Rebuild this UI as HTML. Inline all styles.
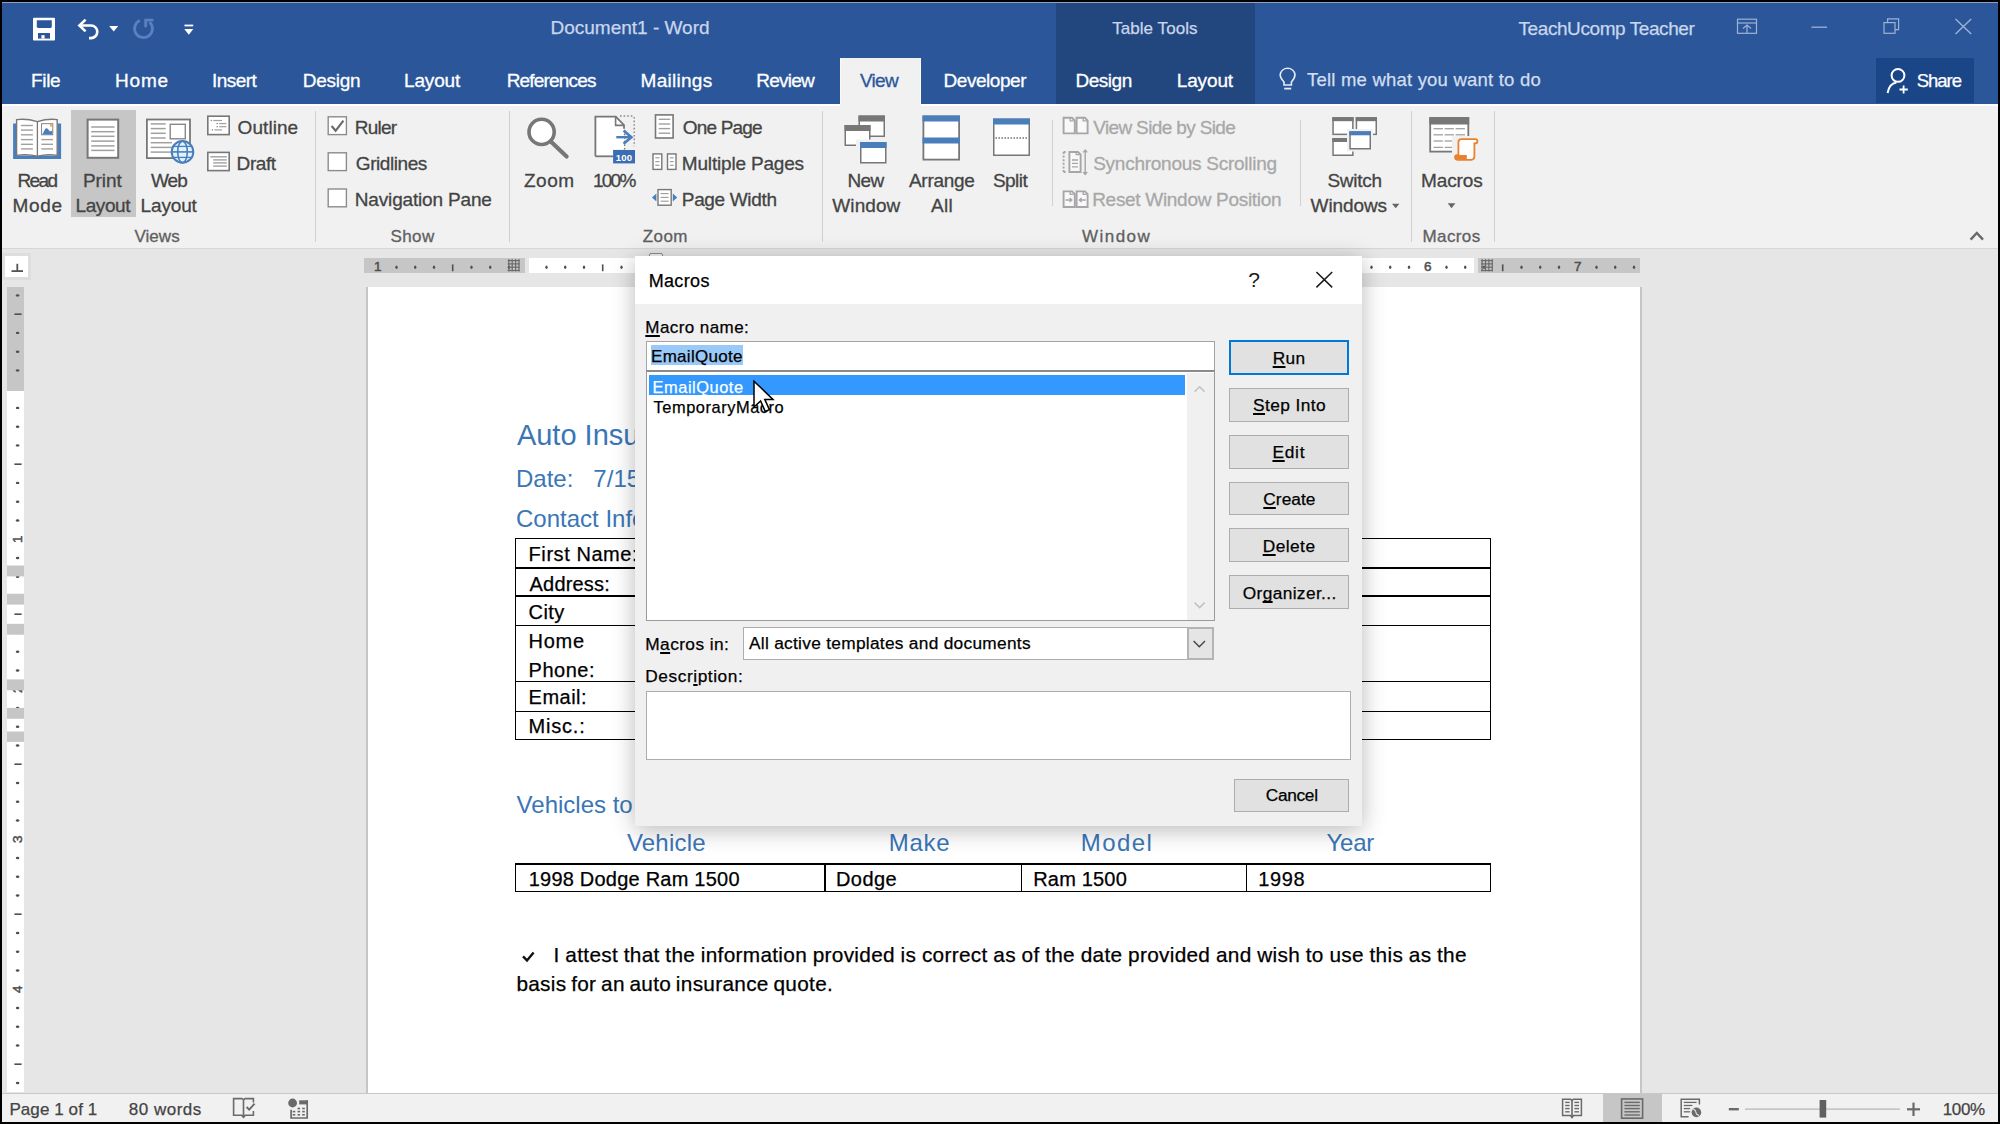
<!DOCTYPE html>
<html><head><meta charset="utf-8"><title>Document1 - Word</title>
<style>
html,body{margin:0;padding:0;}
body{width:2000px;height:1124px;overflow:hidden;position:relative;background:#000;font-family:"Liberation Sans",sans-serif;}
body>div,body>span,body>svg{position:absolute;display:block;}
body>span{white-space:pre;}
u{text-decoration:underline;text-underline-offset:1.6px;text-decoration-thickness:1.6px;text-decoration-skip-ink:none;}
</style></head><body>
<div style="left:2px;top:2px;width:1996px;height:102px;background:#2b579a;"></div>
<div style="left:2px;top:2px;width:1996px;height:1px;background:#8da3c6;"></div>
<div style="left:1055.6px;top:3px;width:199.0px;height:101px;background:#22477f;"></div>
<div style="left:840px;top:58px;width:81px;height:46px;background:#f1f1f1;box-shadow:inset 1px 0 0 #fbfbfb, inset -1px 0 0 #fbfbfb;"></div>
<div style="left:1876px;top:57.7px;width:98px;height:44.89999999999999px;background:#1a4688;"></div>
<div style="left:2px;top:104px;width:1996px;height:144px;background:#f1f1f1;"></div>
<div style="left:2px;top:104px;width:838px;height:1.5999999999999943px;background:#ffffff;"></div>
<div style="left:921px;top:104px;width:1077px;height:1.5999999999999943px;background:#ffffff;"></div>
<div style="left:2px;top:105.6px;width:838px;height:2.8000000000000114px;background:linear-gradient(#f0f2f5,#f1f1f1);"></div>
<div style="left:921px;top:105.6px;width:1077px;height:2.8000000000000114px;background:linear-gradient(#f0f2f5,#f1f1f1);"></div>
<div style="left:2px;top:247.6px;width:1996px;height:1.8000000000000114px;background:#d6d6d6;"></div>
<div style="left:2px;top:249px;width:1996px;height:844px;background:#e6e6e6;"></div>
<div style="left:2px;top:1092.5px;width:1996px;height:1.5px;background:#c8c8c8;"></div>
<div style="left:2px;top:1094px;width:1996px;height:28px;background:#f1f1f1;"></div>
<span style="left:550.50px;top:18.42px;font:400 19px/19px 'Liberation Sans';color:#c9d6ec;letter-spacing:-0.002px;word-spacing:0.000px;-webkit-text-stroke:0.25px currentColor;">Document1 - Word</span>
<span style="left:1112.20px;top:20.21px;font:400 17px/17px 'Liberation Sans';color:#c9d6ec;letter-spacing:0.055px;word-spacing:0.000px;-webkit-text-stroke:0.25px currentColor;">Table Tools</span>
<span style="left:1518.50px;top:18.72px;font:400 19px/19px 'Liberation Sans';color:#c9d6ec;letter-spacing:-0.419px;word-spacing:0.000px;-webkit-text-stroke:0.25px currentColor;">TeachUcomp Teacher</span>
<span style="left:31.00px;top:71.32px;font:400 19px/19px 'Liberation Sans';color:#ffffff;letter-spacing:-0.349px;word-spacing:0.000px;-webkit-text-stroke:0.3px currentColor;">File</span>
<span style="left:115.00px;top:71.32px;font:400 19px/19px 'Liberation Sans';color:#ffffff;letter-spacing:0.795px;word-spacing:0.000px;-webkit-text-stroke:0.3px currentColor;">Home</span>
<span style="left:212.00px;top:71.32px;font:400 19px/19px 'Liberation Sans';color:#ffffff;letter-spacing:-0.548px;word-spacing:0.000px;-webkit-text-stroke:0.3px currentColor;">Insert</span>
<span style="left:302.75px;top:71.32px;font:400 19px/19px 'Liberation Sans';color:#ffffff;letter-spacing:-0.265px;word-spacing:0.000px;-webkit-text-stroke:0.3px currentColor;">Design</span>
<span style="left:404.00px;top:71.32px;font:400 19px/19px 'Liberation Sans';color:#ffffff;letter-spacing:-0.154px;word-spacing:0.000px;-webkit-text-stroke:0.3px currentColor;">Layout</span>
<span style="left:506.70px;top:71.32px;font:400 19px/19px 'Liberation Sans';color:#ffffff;letter-spacing:-0.818px;word-spacing:0.000px;-webkit-text-stroke:0.3px currentColor;">References</span>
<span style="left:640.60px;top:71.32px;font:400 19px/19px 'Liberation Sans';color:#ffffff;letter-spacing:0.273px;word-spacing:0.000px;-webkit-text-stroke:0.3px currentColor;">Mailings</span>
<span style="left:756.30px;top:71.32px;font:400 19px/19px 'Liberation Sans';color:#ffffff;letter-spacing:-0.795px;word-spacing:0.000px;-webkit-text-stroke:0.3px currentColor;">Review</span>
<span style="left:943.50px;top:71.32px;font:400 19px/19px 'Liberation Sans';color:#ffffff;letter-spacing:-0.447px;word-spacing:0.000px;-webkit-text-stroke:0.3px currentColor;">Developer</span>
<span style="left:1075.40px;top:71.32px;font:400 19px/19px 'Liberation Sans';color:#ffffff;letter-spacing:-0.455px;word-spacing:0.000px;-webkit-text-stroke:0.3px currentColor;">Design</span>
<span style="left:1176.80px;top:71.32px;font:400 19px/19px 'Liberation Sans';color:#ffffff;letter-spacing:-0.154px;word-spacing:0.000px;-webkit-text-stroke:0.3px currentColor;">Layout</span>
<span style="left:859.90px;top:71.32px;font:400 19px/19px 'Liberation Sans';color:#2b579a;letter-spacing:-0.673px;word-spacing:0.000px;-webkit-text-stroke:0.3px currentColor;">View</span>
<span style="left:1307.00px;top:71.14px;font:400 18.5px/18.5px 'Liberation Sans';color:#d3def0;letter-spacing:0.208px;word-spacing:0.000px;-webkit-text-stroke:0.25px currentColor;">Tell me what you want to do</span>
<span style="left:1916.70px;top:71.74px;font:400 18.5px/18.5px 'Liberation Sans';color:#ffffff;letter-spacing:-0.994px;word-spacing:0.000px;-webkit-text-stroke:0.25px currentColor;">Share</span>
<div style="left:71px;top:109.5px;width:65px;height:107.5px;background:#c6c6c6;"></div>
<span style="left:17.40px;top:171.42px;font:400 19px/19px 'Liberation Sans';color:#444444;letter-spacing:-1.552px;word-spacing:0.000px;-webkit-text-stroke:0.3px currentColor;">Read</span>
<span style="left:12.60px;top:196.32px;font:400 19px/19px 'Liberation Sans';color:#444444;letter-spacing:0.680px;word-spacing:0.000px;-webkit-text-stroke:0.3px currentColor;">Mode</span>
<span style="left:83.00px;top:171.42px;font:400 19px/19px 'Liberation Sans';color:#444444;letter-spacing:-0.097px;word-spacing:0.000px;-webkit-text-stroke:0.3px currentColor;">Print</span>
<span style="left:75.50px;top:196.32px;font:400 19px/19px 'Liberation Sans';color:#444444;letter-spacing:-0.414px;word-spacing:0.000px;-webkit-text-stroke:0.3px currentColor;">Layout</span>
<span style="left:151.00px;top:171.42px;font:400 19px/19px 'Liberation Sans';color:#444444;letter-spacing:-0.978px;word-spacing:0.000px;-webkit-text-stroke:0.3px currentColor;">Web</span>
<span style="left:140.60px;top:196.32px;font:400 19px/19px 'Liberation Sans';color:#444444;letter-spacing:-0.154px;word-spacing:0.000px;-webkit-text-stroke:0.3px currentColor;">Layout</span>
<span style="left:237.60px;top:118.22px;font:400 19px/19px 'Liberation Sans';color:#444444;letter-spacing:0.061px;word-spacing:0.000px;-webkit-text-stroke:0.3px currentColor;">Outline</span>
<span style="left:236.60px;top:154.12px;font:400 19px/19px 'Liberation Sans';color:#444444;letter-spacing:-0.424px;word-spacing:0.000px;-webkit-text-stroke:0.3px currentColor;">Draft</span>
<span style="left:134.40px;top:227.71px;font:400 17px/17px 'Liberation Sans';color:#606060;letter-spacing:0.065px;word-spacing:0.000px;-webkit-text-stroke:0.3px currentColor;">Views</span>
<span style="left:354.80px;top:118.22px;font:400 19px/19px 'Liberation Sans';color:#444444;letter-spacing:-0.794px;word-spacing:0.000px;-webkit-text-stroke:0.3px currentColor;">Ruler</span>
<span style="left:355.80px;top:154.12px;font:400 19px/19px 'Liberation Sans';color:#444444;letter-spacing:-0.434px;word-spacing:0.000px;-webkit-text-stroke:0.3px currentColor;">Gridlines</span>
<span style="left:354.80px;top:189.92px;font:400 19px/19px 'Liberation Sans';color:#444444;letter-spacing:-0.169px;word-spacing:0.000px;-webkit-text-stroke:0.3px currentColor;">Navigation Pane</span>
<span style="left:390.60px;top:227.71px;font:400 17px/17px 'Liberation Sans';color:#606060;letter-spacing:0.351px;word-spacing:0.000px;-webkit-text-stroke:0.3px currentColor;">Show</span>
<span style="left:524.00px;top:171.42px;font:400 19px/19px 'Liberation Sans';color:#444444;letter-spacing:0.487px;word-spacing:0.000px;-webkit-text-stroke:0.3px currentColor;">Zoom</span>
<span style="left:593.00px;top:171.42px;font:400 19px/19px 'Liberation Sans';color:#444444;letter-spacing:-1.767px;word-spacing:0.000px;-webkit-text-stroke:0.3px currentColor;">100%</span>
<span style="left:682.80px;top:118.22px;font:400 19px/19px 'Liberation Sans';color:#444444;letter-spacing:-0.828px;word-spacing:0.000px;-webkit-text-stroke:0.3px currentColor;">One Page</span>
<span style="left:681.80px;top:154.12px;font:400 19px/19px 'Liberation Sans';color:#444444;letter-spacing:-0.179px;word-spacing:0.000px;-webkit-text-stroke:0.3px currentColor;">Multiple Pages</span>
<span style="left:681.80px;top:189.92px;font:400 19px/19px 'Liberation Sans';color:#444444;letter-spacing:-0.339px;word-spacing:0.000px;-webkit-text-stroke:0.3px currentColor;">Page Width</span>
<span style="left:642.80px;top:227.71px;font:400 17px/17px 'Liberation Sans';color:#606060;letter-spacing:0.402px;word-spacing:0.000px;-webkit-text-stroke:0.3px currentColor;">Zoom</span>
<span style="left:847.40px;top:171.42px;font:400 19px/19px 'Liberation Sans';color:#444444;letter-spacing:-0.594px;word-spacing:0.000px;-webkit-text-stroke:0.3px currentColor;">New</span>
<span style="left:832.30px;top:196.32px;font:400 19px/19px 'Liberation Sans';color:#444444;letter-spacing:0.089px;word-spacing:0.000px;-webkit-text-stroke:0.3px currentColor;">Window</span>
<span style="left:909.00px;top:171.42px;font:400 19px/19px 'Liberation Sans';color:#444444;letter-spacing:-0.305px;word-spacing:0.000px;-webkit-text-stroke:0.3px currentColor;">Arrange</span>
<span style="left:931.00px;top:196.32px;font:400 19px/19px 'Liberation Sans';color:#444444;letter-spacing:0.353px;word-spacing:0.000px;-webkit-text-stroke:0.3px currentColor;">All</span>
<span style="left:992.90px;top:171.42px;font:400 19px/19px 'Liberation Sans';color:#444444;letter-spacing:-0.546px;word-spacing:0.000px;-webkit-text-stroke:0.3px currentColor;">Split</span>
<span style="left:1093.20px;top:118.22px;font:400 19px/19px 'Liberation Sans';color:#a8a8a8;letter-spacing:-0.639px;word-spacing:0.000px;-webkit-text-stroke:0.3px currentColor;">View Side by Side</span>
<span style="left:1093.20px;top:154.12px;font:400 19px/19px 'Liberation Sans';color:#a8a8a8;letter-spacing:-0.259px;word-spacing:0.000px;-webkit-text-stroke:0.3px currentColor;">Synchronous Scrolling</span>
<span style="left:1092.20px;top:189.92px;font:400 19px/19px 'Liberation Sans';color:#a8a8a8;letter-spacing:-0.300px;word-spacing:0.000px;-webkit-text-stroke:0.3px currentColor;">Reset Window Position</span>
<span style="left:1082.00px;top:227.71px;font:400 17px/17px 'Liberation Sans';color:#606060;letter-spacing:1.463px;word-spacing:0.000px;-webkit-text-stroke:0.3px currentColor;">Window</span>
<span style="left:1327.40px;top:171.42px;font:400 19px/19px 'Liberation Sans';color:#444444;letter-spacing:-0.239px;word-spacing:0.000px;-webkit-text-stroke:0.3px currentColor;">Switch</span>
<span style="left:1310.60px;top:196.32px;font:400 19px/19px 'Liberation Sans';color:#444444;letter-spacing:-0.113px;word-spacing:0.000px;-webkit-text-stroke:0.3px currentColor;">Windows</span>
<span style="left:1420.90px;top:171.42px;font:400 19px/19px 'Liberation Sans';color:#444444;letter-spacing:-0.078px;word-spacing:0.000px;-webkit-text-stroke:0.3px currentColor;">Macros</span>
<span style="left:1422.50px;top:227.71px;font:400 17px/17px 'Liberation Sans';color:#606060;letter-spacing:0.394px;word-spacing:0.000px;-webkit-text-stroke:0.3px currentColor;">Macros</span>
<div style="left:315px;top:111px;width:1px;height:131px;background:#d0d0d0;"></div>
<div style="left:509px;top:111px;width:1px;height:131px;background:#d0d0d0;"></div>
<div style="left:821.5px;top:111px;width:1.0px;height:131px;background:#d0d0d0;"></div>
<div style="left:1411px;top:111px;width:1px;height:131px;background:#d0d0d0;"></div>
<div style="left:1493.5px;top:111px;width:1.0px;height:131px;background:#d0d0d0;"></div>
<div style="left:1051.5px;top:120px;width:1.0px;height:86px;background:#d0d0d0;"></div>
<div style="left:1300px;top:120px;width:1px;height:86px;background:#d0d0d0;"></div>
<svg style="left:0;top:0" width="2000" height="260" viewBox="0 0 2000 260"><path d="M33 18.8 Q33 17.8 34 17.8 H54 Q55 17.8 55 18.8 V39.4 Q55 40.4 54 40.4 H34 Q33 40.4 33 39.4 Z" fill="#ffffff" /><path d="M36.8 20.2 H51.8 V27 L50.8 28 H37.8 L36.8 27 Z" fill="#2b579a" /><rect x="38" y="33" width="12" height="5.600000000000001" fill="#2b579a" /><rect x="41.4" y="35.2" width="3.200000000000003" height="3.3999999999999986" fill="#ffffff" /><path d="M80 25.5 H91 A6.3 6.3 0 0 1 91 38.1 H89" fill="none" stroke="#ffffff" stroke-width="2.6" /><path d="M85.6 19.6 L79.4 25.5 L85.6 31.4" fill="none" stroke="#ffffff" stroke-width="2.6" stroke-linejoin="miter"/><path d="M109.2 26 H118.2 L113.7 31.5 Z" fill="#ffffff" /><path d="M139.8 20.6 A8.9 8.9 0 1 0 149.6 22.2" fill="none" stroke="#5b80c0" stroke-width="2.8" /><path d="M153.4 20.1 H145.7 V27.2" fill="none" stroke="#5b80c0" stroke-width="2.8" /><rect x="184.5" y="24.6" width="8.699999999999989" height="1.7999999999999972" fill="#ffffff" /><path d="M184.3 29 H193.3 L188.8 34.8 Z" fill="#ffffff" /><rect x="1737.5" y="19.2" width="19.0" height="14.099999999999998" fill="none" stroke="#9db2d6" stroke-width="1.2" /><line x1="1737.5" y1="23" x2="1756.5" y2="23" stroke="#9db2d6" stroke-width="1.2" /><path d="M1743 28.5 L1747 25 L1751 28.5 M1747 25 V33" fill="none" stroke="#9db2d6" stroke-width="1.2" /><line x1="1811.5" y1="27.2" x2="1827" y2="27.2" stroke="#9db2d6" stroke-width="1.3" /><rect x="1884" y="22.6" width="11" height="10.699999999999996" fill="none" stroke="#9db2d6" stroke-width="1.2" /><path d="M1887.6 22.6 V18.8 H1898.6 V29.6 H1895" fill="none" stroke="#9db2d6" stroke-width="1.2" /><path d="M1955.5 19 L1971.2 34 M1971.2 19 L1955.5 34" fill="none" stroke="#9db2d6" stroke-width="1.4" /><path d="M1284 85 V82 Q1280.2 78 1280.2 74.5 A7.5 7.5 0 0 1 1295 74.5 Q1295 78 1291.4 82 V85 Z" fill="none" stroke="#e6ecf6" stroke-width="1.6" /><line x1="1284.2" y1="88.6" x2="1291.2" y2="88.6" stroke="#e6ecf6" stroke-width="1.8" /><circle cx="1898" cy="75.4" r="6.4" fill="none" stroke="#ffffff" stroke-width="2"/><path d="M1887.6 93 Q1889 83.6 1896.4 82.4" fill="none" stroke="#ffffff" stroke-width="2" /><path d="M1903.6 85.4 V93.6 M1899.5 89.5 H1907.8" fill="none" stroke="#ffffff" stroke-width="1.8" /><path d="M14.8 123.6 V157.2 H59.4 V123.6" fill="none" stroke="#4a7ebb" stroke-width="3.4" /><path d="M16.6 119.6 Q27 118.4 37.4 121.6 Q47.8 118.4 57.2 119.6 V155.4 Q47.8 153.6 37.4 156.2 Q27 153.6 16.6 155.4 Z" fill="#ffffff" stroke="#777777" stroke-width="1.4" /><line x1="37.4" y1="121.6" x2="37.4" y2="156" stroke="#777777" stroke-width="1.3" /><line x1="20.9" y1="125.5" x2="32.9" y2="125.5" stroke="#a0a0a0" stroke-width="1.4" /><line x1="20.9" y1="130.1" x2="32.9" y2="130.1" stroke="#a0a0a0" stroke-width="1.4" /><line x1="20.9" y1="134.8" x2="32.9" y2="134.8" stroke="#a0a0a0" stroke-width="1.4" /><line x1="20.9" y1="139.6" x2="32.9" y2="139.6" stroke="#a0a0a0" stroke-width="1.4" /><line x1="20.9" y1="144.3" x2="32.9" y2="144.3" stroke="#a0a0a0" stroke-width="1.4" /><line x1="20.9" y1="148.9" x2="32.9" y2="148.9" stroke="#a0a0a0" stroke-width="1.4" /><line x1="41.3" y1="139.6" x2="53" y2="139.6" stroke="#a0a0a0" stroke-width="1.4" /><line x1="41.3" y1="144.3" x2="53" y2="144.3" stroke="#a0a0a0" stroke-width="1.4" /><line x1="41.3" y1="148.9" x2="53" y2="148.9" stroke="#a0a0a0" stroke-width="1.4" /><rect x="41.6" y="123.7" width="11.199999999999996" height="11.100000000000009" fill="#ffffff" stroke="#777777" stroke-width="0.9" /><path d="M42.3 134.4 L45.3 128.8 Q46.8 127.4 48.3 129.4 L50 131.6 L52.3 130.6 V134.4 Z" fill="#4a7ebb" /><rect x="50" y="124.2" width="2.3999999999999986" height="2.3999999999999915" fill="#e3b24f" /><rect x="87.6" y="119.6" width="30.60000000000001" height="38.20000000000002" fill="#ffffff" stroke="#777777" stroke-width="2" /><line x1="91.2" y1="127" x2="114.5" y2="127" stroke="#a0a0a0" stroke-width="1.5" /><line x1="91.2" y1="131.7" x2="114.5" y2="131.7" stroke="#a0a0a0" stroke-width="1.5" /><line x1="91.2" y1="136.3" x2="114.5" y2="136.3" stroke="#a0a0a0" stroke-width="1.5" /><line x1="91.2" y1="141.1" x2="114.5" y2="141.1" stroke="#a0a0a0" stroke-width="1.5" /><line x1="91.2" y1="145.9" x2="114.5" y2="145.9" stroke="#a0a0a0" stroke-width="1.5" /><line x1="91.2" y1="150.4" x2="114.5" y2="150.4" stroke="#a0a0a0" stroke-width="1.5" /><rect x="146.9" y="119.5" width="43.099999999999994" height="38.599999999999994" fill="#ffffff" stroke="#777777" stroke-width="1.8" /><line x1="150.7" y1="123.9" x2="165.7" y2="123.9" stroke="#a0a0a0" stroke-width="1.5" /><line x1="150.7" y1="128.6" x2="165.7" y2="128.6" stroke="#a0a0a0" stroke-width="1.5" /><line x1="150.7" y1="133.3" x2="165.7" y2="133.3" stroke="#a0a0a0" stroke-width="1.5" /><line x1="150.7" y1="138" x2="165.7" y2="138" stroke="#a0a0a0" stroke-width="1.5" /><line x1="150.7" y1="142.7" x2="172" y2="142.7" stroke="#a0a0a0" stroke-width="1.5" /><line x1="150.7" y1="147.4" x2="172" y2="147.4" stroke="#a0a0a0" stroke-width="1.5" /><line x1="150.7" y1="152.1" x2="172" y2="152.1" stroke="#a0a0a0" stroke-width="1.5" /><rect x="170.2" y="124.3" width="15.100000000000023" height="14.500000000000014" fill="#ffffff" stroke="#888" stroke-width="1.4" /><circle cx="182.5" cy="151.9" r="10.8" fill="#dff3ff" stroke="#4a7ebb" stroke-width="2"/><ellipse cx="182.5" cy="151.9" rx="4.8" ry="10.8" fill="none" stroke="#4a7ebb" stroke-width="1.6"/><line x1="171.8" y1="151.9" x2="193.2" y2="151.9" stroke="#4a7ebb" stroke-width="1.6" /><line x1="173.5" y1="146.4" x2="191.5" y2="146.4" stroke="#4a7ebb" stroke-width="1.3" /><line x1="173.5" y1="157.4" x2="191.5" y2="157.4" stroke="#4a7ebb" stroke-width="1.3" /><rect x="207.8" y="116.2" width="21.399999999999977" height="18.39999999999999" fill="#ffffff" stroke="#777777" stroke-width="1.6" /><rect x="210.6" y="119.9" width="1.200000000000017" height="1.1999999999999886" fill="#777777" /><line x1="213.2" y1="120.5" x2="222" y2="120.5" stroke="#a0a0a0" stroke-width="1.2" /><rect x="216.6" y="123" width="1.200000000000017" height="1.2000000000000028" fill="#777777" /><line x1="219.2" y1="123.6" x2="226.4" y2="123.6" stroke="#a0a0a0" stroke-width="1.2" /><rect x="216.6" y="126.1" width="1.200000000000017" height="1.2000000000000028" fill="#777777" /><line x1="219.2" y1="126.7" x2="226.4" y2="126.7" stroke="#a0a0a0" stroke-width="1.2" /><rect x="211.8" y="129.3" width="1.1999999999999886" height="1.1999999999999886" fill="#777777" /><line x1="214.4" y1="129.9" x2="222" y2="129.9" stroke="#a0a0a0" stroke-width="1.2" /><rect x="207.8" y="152.4" width="21.399999999999977" height="18.19999999999999" fill="#ffffff" stroke="#777777" stroke-width="1.6" /><line x1="210.3" y1="156.8" x2="226.8" y2="156.8" stroke="#a0a0a0" stroke-width="1.4" /><line x1="213.2" y1="159.9" x2="226.8" y2="159.9" stroke="#a0a0a0" stroke-width="1.4" /><line x1="213.2" y1="162.9" x2="226.8" y2="162.9" stroke="#a0a0a0" stroke-width="1.4" /><line x1="213.2" y1="166.1" x2="226.8" y2="166.1" stroke="#a0a0a0" stroke-width="1.4" /><rect x="328.2" y="116.8" width="18.19999999999999" height="17.799999999999997" fill="#ffffff" stroke="#8c8c8c" stroke-width="1.4" /><rect x="328.2" y="152.8" width="18.19999999999999" height="17.799999999999983" fill="#ffffff" stroke="#8c8c8c" stroke-width="1.4" /><rect x="328.2" y="189.0" width="18.19999999999999" height="17.799999999999983" fill="#ffffff" stroke="#8c8c8c" stroke-width="1.4" /><path d="M331.6 126 L335.6 130.8 L343.4 120.6" fill="none" stroke="#6a6a6a" stroke-width="2.2" /><circle cx="541.6" cy="131.9" r="12.6" fill="#ffffff" stroke="#777777" stroke-width="3.6"/><line x1="550.8" y1="141.4" x2="566.6" y2="156.6" stroke="#777777" stroke-width="4.2" stroke-linecap="round"/><path d="M595.4 116.6 H615.8 L624 125 V149 H613 V156.3 H595.4 Z" fill="#ffffff" /><path d="M595.4 156.3 V116.6 H615.8 L624 125 V128.7" fill="none" stroke="#777777" stroke-width="1.8" /><line x1="595.4" y1="156.3" x2="613" y2="156.3" stroke="#777777" stroke-width="1.8" /><path d="M615.6 116.6 V125.4 H624" fill="none" stroke="#777777" stroke-width="1.6" /><line x1="620" y1="116" x2="634.2" y2="116" stroke="#888" stroke-width="1.4" stroke-dasharray="1.6 2"/><line x1="634.2" y1="117" x2="634.2" y2="146.3" stroke="#888" stroke-width="1.4" stroke-dasharray="1.6 2"/><line x1="624.6" y1="130" x2="624.6" y2="149.5" stroke="#777" stroke-width="1.4" stroke-dasharray="1.6 2"/><line x1="616.3" y1="137.2" x2="630.5" y2="137.2" stroke="#4a7ebb" stroke-width="2.4" /><path d="M623.6 130.6 L631.4 137.2 L623.6 143.8" fill="none" stroke="#4a7ebb" stroke-width="2.6" /><rect x="613.1" y="150" width="21.899999999999977" height="13.400000000000006" fill="#3a6db1" /><text x="624" y="160.6" font-family="Liberation Sans" font-weight="700" font-size="9.6" fill="#fff" text-anchor="middle" letter-spacing="0.2">100</text><rect x="655.5" y="114.9" width="17.600000000000023" height="23.099999999999994" fill="#ffffff" stroke="#777777" stroke-width="1.6" /><line x1="658.7" y1="119.3" x2="670.2" y2="119.3" stroke="#a0a0a0" stroke-width="1.4" /><line x1="658.7" y1="124" x2="670.2" y2="124" stroke="#a0a0a0" stroke-width="1.4" /><line x1="658.7" y1="128.6" x2="670.2" y2="128.6" stroke="#a0a0a0" stroke-width="1.4" /><line x1="658.7" y1="133.2" x2="670.2" y2="133.2" stroke="#a0a0a0" stroke-width="1.4" /><rect x="653" y="153.9" width="8.799999999999955" height="15.5" fill="#ffffff" stroke="#777777" stroke-width="1.4" /><rect x="667.5" y="153.9" width="8.5" height="15.5" fill="#ffffff" stroke="#777777" stroke-width="1.4" /><line x1="655.3" y1="157.8" x2="659.5" y2="157.8" stroke="#a0a0a0" stroke-width="1.2" /><line x1="669.8" y1="157.8" x2="673.7" y2="157.8" stroke="#a0a0a0" stroke-width="1.2" /><line x1="655.3" y1="161.6" x2="659.5" y2="161.6" stroke="#a0a0a0" stroke-width="1.2" /><line x1="669.8" y1="161.6" x2="673.7" y2="161.6" stroke="#a0a0a0" stroke-width="1.2" /><line x1="655.3" y1="165.3" x2="659.5" y2="165.3" stroke="#a0a0a0" stroke-width="1.2" /><line x1="669.8" y1="165.3" x2="673.7" y2="165.3" stroke="#a0a0a0" stroke-width="1.2" /><rect x="658" y="189.6" width="13.200000000000045" height="15.599999999999994" fill="#ffffff" stroke="#777777" stroke-width="1.4" /><line x1="660.6" y1="193.6" x2="668.6" y2="193.6" stroke="#a0a0a0" stroke-width="1.2" /><line x1="660.6" y1="197.4" x2="668.6" y2="197.4" stroke="#a0a0a0" stroke-width="1.2" /><line x1="660.6" y1="201.2" x2="668.6" y2="201.2" stroke="#a0a0a0" stroke-width="1.2" /><path d="M652 197.4 L656.4 193.4 V201.4 Z" fill="#4a7ebb" /><path d="M677.2 197.4 L672.8 193.4 V201.4 Z" fill="#4a7ebb" /><rect x="859.25" y="116.25" width="25.0" height="20.0" fill="#ffffff" stroke="#777777" stroke-width="1.5" /><rect x="858.5" y="115.5" width="26.5" height="6.0" fill="#777777" /><rect x="845.25" y="125.75" width="24.5" height="19.5" fill="#ffffff" stroke="#777777" stroke-width="1.5" /><rect x="844.5" y="125" width="26.0" height="6" fill="#777777" /><rect x="856" y="139.5" width="33" height="26.5" fill="#f1f1f1" /><rect x="860.75" y="142.75" width="25.0" height="20.0" fill="#ffffff" stroke="#777777" stroke-width="1.5" /><rect x="860" y="142" width="26.5" height="6" fill="#4a7ebb" /><rect x="923.4" y="116.4" width="35.700000000000045" height="43.19999999999999" fill="#ffffff" stroke="#777777" stroke-width="1.8" /><rect x="922.5" y="115.5" width="37.5" height="6.0" fill="#4a7ebb" /><rect x="922.5" y="137.5" width="37.5" height="6.0" fill="#4a7ebb" /><rect x="993.75" y="119.25" width="35.5" height="36.0" fill="#ffffff" stroke="#777777" stroke-width="1.5" /><rect x="993" y="118.5" width="37" height="6.0" fill="#4a7ebb" /><line x1="995.5" y1="138" x2="1028" y2="138" stroke="#666" stroke-width="1.4" stroke-dasharray="1.4 1.6"/><path d="M1063.6 117.8 H1072 L1074.8 120.6 V133.4 H1063.6 Z" fill="#faf7fa" stroke="#a6a6a6" stroke-width="1.9" /><path d="M1076.6 117.8 H1085 L1087.6 120.6 V133.4 H1076.6 Z" fill="#faf7fa" stroke="#a6a6a6" stroke-width="1.9" /><path d="M1063.6 152 H1067 M1063.6 172 H1067 M1063.6 152 V172" fill="none" stroke="#a6a6a6" stroke-width="1.9" stroke-dasharray="2 1.6"/><path d="M1069.4 152 H1078 L1080.6 154.6 V172 H1069.4 Z" fill="#faf7fa" stroke="#a6a6a6" stroke-width="1.9" /><path d="M1072 160 H1078 M1072 163.4 H1078 M1072 166.8 H1078" fill="none" stroke="#a6a6a6" stroke-width="1.3" /><path d="M1085.2 150 V174.4 M1083.2 152.4 L1085.2 150 L1087.2 152.4 M1083.2 172 L1085.2 174.4 L1087.2 172" fill="none" stroke="#a6a6a6" stroke-width="1.4" /><path d="M1063.6 191.4 H1072 L1074.8 194.2 V207 H1063.6 Z" fill="#faf7fa" stroke="#a6a6a6" stroke-width="1.9" /><path d="M1076.6 191.4 H1085 L1087.6 194.2 V207 H1076.6 Z" fill="#faf7fa" stroke="#a6a6a6" stroke-width="1.9" /><path d="M1065.4 200 H1071.8 M1069.6 198 L1071.8 200 L1069.6 202 M1085.8 200 H1079.4 M1081.6 198 L1079.4 200 L1081.6 202" fill="none" stroke="#a6a6a6" stroke-width="1.4" /><path d="M1070.1999999999998 117.8 V120.8 H1073.6" fill="none" stroke="#a6a6a6" stroke-width="1.3" /><path d="M1083.1999999999998 117.8 V120.8 H1086.6" fill="none" stroke="#a6a6a6" stroke-width="1.3" /><path d="M1070.1999999999998 191.4 V194.4 H1073.6" fill="none" stroke="#a6a6a6" stroke-width="1.3" /><path d="M1083.1999999999998 191.4 V194.4 H1086.6" fill="none" stroke="#a6a6a6" stroke-width="1.3" /><path d="M1076.2 152 V154.6 H1079.6" fill="none" stroke="#a6a6a6" stroke-width="1.3" /><rect x="1333.05" y="117.95" width="19.799999999999955" height="16.39999999999999" fill="#ffffff" stroke="#777777" stroke-width="1.5" /><rect x="1332.3" y="117.2" width="21.299999999999955" height="4.0" fill="#777777" /><rect x="1356.45" y="117.95" width="19.799999999999955" height="16.39999999999999" fill="#ffffff" stroke="#777777" stroke-width="1.5" /><rect x="1355.7" y="117.2" width="21.299999999999955" height="4.0" fill="#777777" /><rect x="1333.05" y="138.75" width="19.799999999999955" height="16.5" fill="#ffffff" stroke="#777777" stroke-width="1.5" /><rect x="1332.3" y="138" width="21.299999999999955" height="4" fill="#777777" /><rect x="1347" y="129" width="26" height="22.5" fill="#f1f1f1" /><rect x="1350.05" y="132.05" width="20.200000000000045" height="16.69999999999999" fill="#ffffff" stroke="#777777" stroke-width="1.5" /><rect x="1349.3" y="131.3" width="21.700000000000045" height="4.0" fill="#4a7ebb" /><path d="M1392 203.8 H1399.4 L1395.7 208.2 Z" fill="#666" /><rect x="1430.2" y="118" width="38.09999999999991" height="33.599999999999994" fill="#ffffff" stroke="#777777" stroke-width="1.8" /><rect x="1429.3" y="117.2" width="39.90000000000009" height="7.299999999999997" fill="#777777" /><line x1="1433.5" y1="128.7" x2="1442.9" y2="128.7" stroke="#a0a0a0" stroke-width="1.3" /><line x1="1444.6" y1="128.7" x2="1453.9" y2="128.7" stroke="#a0a0a0" stroke-width="1.3" /><line x1="1455.6" y1="128.7" x2="1465" y2="128.7" stroke="#a0a0a0" stroke-width="1.3" /><line x1="1433.5" y1="134.8" x2="1442.9" y2="134.8" stroke="#a0a0a0" stroke-width="1.3" /><line x1="1444.6" y1="134.8" x2="1453.9" y2="134.8" stroke="#a0a0a0" stroke-width="1.3" /><line x1="1455.6" y1="134.8" x2="1465" y2="134.8" stroke="#a0a0a0" stroke-width="1.3" /><line x1="1433.5" y1="141" x2="1442.9" y2="141" stroke="#a0a0a0" stroke-width="1.3" /><line x1="1444.6" y1="141" x2="1453.9" y2="141" stroke="#a0a0a0" stroke-width="1.3" /><line x1="1455.6" y1="141" x2="1465" y2="141" stroke="#a0a0a0" stroke-width="1.3" /><line x1="1433.5" y1="147.4" x2="1442.9" y2="147.4" stroke="#a0a0a0" stroke-width="1.3" /><line x1="1444.6" y1="147.4" x2="1453.9" y2="147.4" stroke="#a0a0a0" stroke-width="1.3" /><line x1="1455.6" y1="147.4" x2="1465" y2="147.4" stroke="#a0a0a0" stroke-width="1.3" /><rect x="1452" y="136" width="28" height="26" fill="#f1f1f1" /><path d="M1458.4 156 V142.2 Q1458.4 139.2 1461.4 139.2 H1475.6 Q1477.4 139.2 1477.4 141.4 Q1477.4 143.4 1474.4 143.4 V156.6 Q1474.4 159.8 1471.2 159.8 H1458 Q1455 159.8 1455 157 Q1455 155 1458.4 155" fill="#ffffff" stroke="#e8822e" stroke-width="1.8" /><path d="M1455 157.2 Q1455 155 1458 155 H1466.8 V159.8 H1458 Q1455 159.8 1455 157.2 Z" fill="#e8822e" /><path d="M1447.7 203.2 H1455.4 L1451.55 208.2 Z" fill="#666" /><path d="M1970.6 239.6 L1976.8 233 L1983 239.6" fill="none" stroke="#6a6a6a" stroke-width="2.4" /></svg>
<div style="left:364px;top:257.5px;width:161px;height:15.5px;background:#c6c6c6;"></div>
<div style="left:528.5px;top:257.5px;width:945.5px;height:15.5px;background:#ffffff;"></div>
<div style="left:1477.5px;top:257.5px;width:162.5px;height:15.5px;background:#c6c6c6;"></div>
<div style="left:5px;top:256px;width:23px;height:21px;background:#ffffff;box-shadow:0 0 0 3px #dedede;"></div>
<div style="left:7px;top:287px;width:17px;height:103.5px;background:#c6c6c6;"></div>
<div style="left:7px;top:390.5px;width:17px;height:701.5px;background:#ffffff;"></div>
<svg style="left:0;top:0" width="2000" height="1124" viewBox="0 0 2000 1124"><text x="377.7" y="271" font-family="Liberation Sans" font-size="13.5" fill="#505050" stroke="#505050" stroke-width="0.5" text-anchor="middle">1</text><ellipse cx="396.5" cy="267.2" rx="1.2" ry="1.8" fill="#505050"/><ellipse cx="415.2" cy="267.2" rx="1.2" ry="1.8" fill="#505050"/><ellipse cx="434.0" cy="267.2" rx="1.2" ry="1.8" fill="#505050"/><rect x="451.90000000000003" y="264.4" width="1.6000000000000227" height="6.800000000000011" fill="#505050" /><ellipse cx="471.5" cy="267.2" rx="1.2" ry="1.8" fill="#505050"/><ellipse cx="490.2" cy="267.2" rx="1.2" ry="1.8" fill="#505050"/><ellipse cx="509.0" cy="267.2" rx="1.2" ry="1.8" fill="#505050"/><ellipse cx="546.5" cy="267.2" rx="1.2" ry="1.8" fill="#505050"/><ellipse cx="565.2" cy="267.2" rx="1.2" ry="1.8" fill="#505050"/><ellipse cx="584.0" cy="267.2" rx="1.2" ry="1.8" fill="#505050"/><rect x="601.9000000000001" y="264.4" width="1.599999999999909" height="6.800000000000011" fill="#505050" /><ellipse cx="621.5" cy="267.2" rx="1.2" ry="1.8" fill="#505050"/><ellipse cx="640.2" cy="267.2" rx="1.2" ry="1.8" fill="#505050"/><ellipse cx="659.0" cy="267.2" rx="1.2" ry="1.8" fill="#505050"/><text x="677.7" y="271" font-family="Liberation Sans" font-size="13.5" fill="#505050" stroke="#505050" stroke-width="0.5" text-anchor="middle">1</text><ellipse cx="696.5" cy="267.2" rx="1.2" ry="1.8" fill="#505050"/><ellipse cx="715.2" cy="267.2" rx="1.2" ry="1.8" fill="#505050"/><ellipse cx="734.0" cy="267.2" rx="1.2" ry="1.8" fill="#505050"/><rect x="751.9000000000001" y="264.4" width="1.599999999999909" height="6.800000000000011" fill="#505050" /><ellipse cx="771.5" cy="267.2" rx="1.2" ry="1.8" fill="#505050"/><ellipse cx="790.2" cy="267.2" rx="1.2" ry="1.8" fill="#505050"/><ellipse cx="809.0" cy="267.2" rx="1.2" ry="1.8" fill="#505050"/><text x="827.7" y="271" font-family="Liberation Sans" font-size="13.5" fill="#505050" stroke="#505050" stroke-width="0.5" text-anchor="middle">2</text><ellipse cx="846.5" cy="267.2" rx="1.2" ry="1.8" fill="#505050"/><ellipse cx="865.2" cy="267.2" rx="1.2" ry="1.8" fill="#505050"/><ellipse cx="884.0" cy="267.2" rx="1.2" ry="1.8" fill="#505050"/><rect x="901.9000000000001" y="264.4" width="1.599999999999909" height="6.800000000000011" fill="#505050" /><ellipse cx="921.5" cy="267.2" rx="1.2" ry="1.8" fill="#505050"/><ellipse cx="940.2" cy="267.2" rx="1.2" ry="1.8" fill="#505050"/><ellipse cx="959.0" cy="267.2" rx="1.2" ry="1.8" fill="#505050"/><text x="977.7" y="271" font-family="Liberation Sans" font-size="13.5" fill="#505050" stroke="#505050" stroke-width="0.5" text-anchor="middle">3</text><ellipse cx="996.5" cy="267.2" rx="1.2" ry="1.8" fill="#505050"/><ellipse cx="1015.2" cy="267.2" rx="1.2" ry="1.8" fill="#505050"/><ellipse cx="1034.0" cy="267.2" rx="1.2" ry="1.8" fill="#505050"/><rect x="1051.9" y="264.4" width="1.599999999999909" height="6.800000000000011" fill="#505050" /><ellipse cx="1071.5" cy="267.2" rx="1.2" ry="1.8" fill="#505050"/><ellipse cx="1090.2" cy="267.2" rx="1.2" ry="1.8" fill="#505050"/><ellipse cx="1109.0" cy="267.2" rx="1.2" ry="1.8" fill="#505050"/><text x="1127.7" y="271" font-family="Liberation Sans" font-size="13.5" fill="#505050" stroke="#505050" stroke-width="0.5" text-anchor="middle">4</text><ellipse cx="1146.5" cy="267.2" rx="1.2" ry="1.8" fill="#505050"/><ellipse cx="1165.2" cy="267.2" rx="1.2" ry="1.8" fill="#505050"/><ellipse cx="1184.0" cy="267.2" rx="1.2" ry="1.8" fill="#505050"/><rect x="1201.9" y="264.4" width="1.599999999999909" height="6.800000000000011" fill="#505050" /><ellipse cx="1221.5" cy="267.2" rx="1.2" ry="1.8" fill="#505050"/><ellipse cx="1240.2" cy="267.2" rx="1.2" ry="1.8" fill="#505050"/><ellipse cx="1259.0" cy="267.2" rx="1.2" ry="1.8" fill="#505050"/><text x="1277.7" y="271" font-family="Liberation Sans" font-size="13.5" fill="#505050" stroke="#505050" stroke-width="0.5" text-anchor="middle">5</text><ellipse cx="1296.5" cy="267.2" rx="1.2" ry="1.8" fill="#505050"/><ellipse cx="1315.2" cy="267.2" rx="1.2" ry="1.8" fill="#505050"/><ellipse cx="1334.0" cy="267.2" rx="1.2" ry="1.8" fill="#505050"/><rect x="1351.9" y="264.4" width="1.599999999999909" height="6.800000000000011" fill="#505050" /><ellipse cx="1371.5" cy="267.2" rx="1.2" ry="1.8" fill="#505050"/><ellipse cx="1390.2" cy="267.2" rx="1.2" ry="1.8" fill="#505050"/><ellipse cx="1409.0" cy="267.2" rx="1.2" ry="1.8" fill="#505050"/><text x="1427.7" y="271" font-family="Liberation Sans" font-size="13.5" fill="#505050" stroke="#505050" stroke-width="0.5" text-anchor="middle">6</text><ellipse cx="1446.5" cy="267.2" rx="1.2" ry="1.8" fill="#505050"/><ellipse cx="1465.2" cy="267.2" rx="1.2" ry="1.8" fill="#505050"/><ellipse cx="1484.0" cy="267.2" rx="1.2" ry="1.8" fill="#505050"/><rect x="1501.9" y="264.4" width="1.599999999999909" height="6.800000000000011" fill="#505050" /><ellipse cx="1521.5" cy="267.2" rx="1.2" ry="1.8" fill="#505050"/><ellipse cx="1540.2" cy="267.2" rx="1.2" ry="1.8" fill="#505050"/><ellipse cx="1559.0" cy="267.2" rx="1.2" ry="1.8" fill="#505050"/><text x="1577.7" y="271" font-family="Liberation Sans" font-size="13.5" fill="#505050" stroke="#505050" stroke-width="0.5" text-anchor="middle">7</text><ellipse cx="1596.5" cy="267.2" rx="1.2" ry="1.8" fill="#505050"/><ellipse cx="1615.2" cy="267.2" rx="1.2" ry="1.8" fill="#505050"/><ellipse cx="1634.0" cy="267.2" rx="1.2" ry="1.8" fill="#505050"/><rect x="508.20000000000005" y="259.2" width="1.1999999999999886" height="12.199999999999989" fill="#6a6a6a" /><rect x="507.70000000000005" y="260.0" width="12.0" height="1.1999999999999886" fill="#6a6a6a" /><rect x="511.6" y="259.2" width="1.2000000000000455" height="12.199999999999989" fill="#6a6a6a" /><rect x="507.70000000000005" y="263.3" width="12.0" height="1.1999999999999886" fill="#6a6a6a" /><rect x="515.0" y="259.2" width="1.2000000000000455" height="12.199999999999989" fill="#6a6a6a" /><rect x="507.70000000000005" y="266.6" width="12.0" height="1.1999999999999886" fill="#6a6a6a" /><rect x="518.4000000000001" y="259.2" width="1.2000000000000455" height="12.199999999999989" fill="#6a6a6a" /><rect x="507.70000000000005" y="269.9" width="12.0" height="1.1999999999999886" fill="#6a6a6a" /><rect x="1481.5" y="259.2" width="1.2000000000000455" height="12.199999999999989" fill="#6a6a6a" /><rect x="1481" y="260.0" width="12" height="1.1999999999999886" fill="#6a6a6a" /><rect x="1484.9" y="259.2" width="1.2000000000000455" height="12.199999999999989" fill="#6a6a6a" /><rect x="1481" y="263.3" width="12" height="1.1999999999999886" fill="#6a6a6a" /><rect x="1488.3" y="259.2" width="1.2000000000000455" height="12.199999999999989" fill="#6a6a6a" /><rect x="1481" y="266.6" width="12" height="1.1999999999999886" fill="#6a6a6a" /><rect x="1491.7" y="259.2" width="1.2000000000000455" height="12.199999999999989" fill="#6a6a6a" /><rect x="1481" y="269.9" width="12" height="1.1999999999999886" fill="#6a6a6a" /><ellipse cx="17.6" cy="295.4" rx="1.8" ry="1.2" fill="#505050"/><rect x="14.4" y="313.4" width="7.200000000000001" height="1.6000000000000227" fill="#505050" /><ellipse cx="17.6" cy="332.9" rx="1.8" ry="1.2" fill="#505050"/><ellipse cx="17.6" cy="351.7" rx="1.8" ry="1.2" fill="#505050"/><ellipse cx="17.6" cy="370.4" rx="1.8" ry="1.2" fill="#505050"/><ellipse cx="17.6" cy="407.9" rx="1.8" ry="1.2" fill="#505050"/><ellipse cx="17.6" cy="426.7" rx="1.8" ry="1.2" fill="#505050"/><ellipse cx="17.6" cy="445.4" rx="1.8" ry="1.2" fill="#505050"/><rect x="14.4" y="463.4" width="7.200000000000001" height="1.6000000000000227" fill="#505050" /><ellipse cx="17.6" cy="482.9" rx="1.8" ry="1.2" fill="#505050"/><ellipse cx="17.6" cy="501.7" rx="1.8" ry="1.2" fill="#505050"/><ellipse cx="17.6" cy="520.5" rx="1.8" ry="1.2" fill="#505050"/><text x="0" y="0" transform="translate(21.6 539.2) rotate(-90)" font-family="Liberation Sans" font-size="13.5" fill="#505050" stroke="#505050" stroke-width="0.5" text-anchor="middle">1</text><ellipse cx="17.6" cy="558.0" rx="1.8" ry="1.2" fill="#505050"/><ellipse cx="17.6" cy="576.7" rx="1.8" ry="1.2" fill="#505050"/><ellipse cx="17.6" cy="595.5" rx="1.8" ry="1.2" fill="#505050"/><rect x="14.4" y="613.4000000000001" width="7.200000000000001" height="1.599999999999909" fill="#505050" /><ellipse cx="17.6" cy="633.0" rx="1.8" ry="1.2" fill="#505050"/><ellipse cx="17.6" cy="651.7" rx="1.8" ry="1.2" fill="#505050"/><ellipse cx="17.6" cy="670.5" rx="1.8" ry="1.2" fill="#505050"/><text x="0" y="0" transform="translate(21.6 689.2) rotate(-90)" font-family="Liberation Sans" font-size="13.5" fill="#505050" stroke="#505050" stroke-width="0.5" text-anchor="middle">2</text><ellipse cx="17.6" cy="708.0" rx="1.8" ry="1.2" fill="#505050"/><ellipse cx="17.6" cy="726.7" rx="1.8" ry="1.2" fill="#505050"/><ellipse cx="17.6" cy="745.5" rx="1.8" ry="1.2" fill="#505050"/><rect x="14.4" y="763.4000000000001" width="7.200000000000001" height="1.599999999999909" fill="#505050" /><ellipse cx="17.6" cy="783.0" rx="1.8" ry="1.2" fill="#505050"/><ellipse cx="17.6" cy="801.7" rx="1.8" ry="1.2" fill="#505050"/><ellipse cx="17.6" cy="820.5" rx="1.8" ry="1.2" fill="#505050"/><text x="0" y="0" transform="translate(21.6 839.2) rotate(-90)" font-family="Liberation Sans" font-size="13.5" fill="#505050" stroke="#505050" stroke-width="0.5" text-anchor="middle">3</text><ellipse cx="17.6" cy="858.0" rx="1.8" ry="1.2" fill="#505050"/><ellipse cx="17.6" cy="876.7" rx="1.8" ry="1.2" fill="#505050"/><ellipse cx="17.6" cy="895.5" rx="1.8" ry="1.2" fill="#505050"/><rect x="14.4" y="913.4000000000001" width="7.200000000000001" height="1.599999999999909" fill="#505050" /><ellipse cx="17.6" cy="933.0" rx="1.8" ry="1.2" fill="#505050"/><ellipse cx="17.6" cy="951.7" rx="1.8" ry="1.2" fill="#505050"/><ellipse cx="17.6" cy="970.5" rx="1.8" ry="1.2" fill="#505050"/><text x="0" y="0" transform="translate(21.6 989.2) rotate(-90)" font-family="Liberation Sans" font-size="13.5" fill="#505050" stroke="#505050" stroke-width="0.5" text-anchor="middle">4</text><ellipse cx="17.6" cy="1008.0" rx="1.8" ry="1.2" fill="#505050"/><ellipse cx="17.6" cy="1026.7" rx="1.8" ry="1.2" fill="#505050"/><ellipse cx="17.6" cy="1045.5" rx="1.8" ry="1.2" fill="#505050"/><rect x="14.4" y="1063.4" width="7.200000000000001" height="1.599999999999909" fill="#505050" /><ellipse cx="17.6" cy="1083.0" rx="1.8" ry="1.2" fill="#505050"/><rect x="11.5" y="270.2" width="11.5" height="1.8000000000000114" fill="#555" /><rect x="16.4" y="263.8" width="1.8000000000000007" height="7.199999999999989" fill="#555" /><rect x="7" y="565.5" width="17" height="10.899999999999977" fill="#c6c6c6" /><rect x="7" y="593.75" width="17" height="10.850000000000023" fill="#c6c6c6" /><rect x="7" y="623.8" width="17" height="10.900000000000091" fill="#c6c6c6" /><rect x="7" y="679.4" width="17" height="10.899999999999977" fill="#c6c6c6" /><rect x="7" y="707.9" width="17" height="10.850000000000023" fill="#c6c6c6" /><rect x="7" y="731.5" width="17" height="10.399999999999977" fill="#c6c6c6" /></svg>
<div style="left:366px;top:287px;width:2px;height:805.5px;background:#c6c6c6;"></div>
<div style="left:368px;top:287px;width:1272px;height:805.5px;background:#ffffff;"></div>
<div style="left:1640px;top:287px;width:2px;height:805.5px;background:#c6c6c6;"></div>
<span style="left:516.90px;top:421.15px;font:400 29px/29px 'Liberation Sans';color:#3a76b7;letter-spacing:0.000px;word-spacing:0.000px;">Auto Insurance Quote</span>
<span style="left:516.00px;top:467.18px;font:400 24px/24px 'Liberation Sans';color:#3a76b7;letter-spacing:0.000px;word-spacing:0.000px;">Date:   7/15/2016</span>
<span style="left:516.00px;top:506.58px;font:400 24px/24px 'Liberation Sans';color:#3a76b7;letter-spacing:0.000px;word-spacing:0.000px;">Contact Information</span>
<div style="left:514.7px;top:537.75px;width:976.5999999999999px;height:1.5px;background:#000;"></div>
<div style="left:514.7px;top:567.25px;width:976.5999999999999px;height:1.5px;background:#000;"></div>
<div style="left:514.7px;top:595.25px;width:976.5999999999999px;height:1.5px;background:#000;"></div>
<div style="left:514.7px;top:624.75px;width:976.5999999999999px;height:1.5px;background:#000;"></div>
<div style="left:514.7px;top:680.75px;width:976.5999999999999px;height:1.5px;background:#000;"></div>
<div style="left:514.7px;top:710.55px;width:976.5999999999999px;height:1.5px;background:#000;"></div>
<div style="left:514.7px;top:738.95px;width:976.5999999999999px;height:1.5px;background:#000;"></div>
<div style="left:514.7px;top:537.75px;width:1.5px;height:202.70000000000005px;background:#000;"></div>
<div style="left:1489.8px;top:537.75px;width:1.5px;height:202.70000000000005px;background:#000;"></div>
<span style="left:528.60px;top:544.07px;font:400 20px/20px 'Liberation Sans';color:#000;letter-spacing:0.562px;word-spacing:0.000px;-webkit-text-stroke:0.25px currentColor;">First Name:</span>
<span style="left:529.60px;top:573.67px;font:400 20px/20px 'Liberation Sans';color:#000;letter-spacing:0.176px;word-spacing:0.000px;-webkit-text-stroke:0.25px currentColor;">Address:</span>
<span style="left:528.60px;top:601.57px;font:400 20px/20px 'Liberation Sans';color:#000;letter-spacing:0.419px;word-spacing:0.000px;-webkit-text-stroke:0.25px currentColor;">City</span>
<span style="left:528.60px;top:631.07px;font:400 20px/20px 'Liberation Sans';color:#000;letter-spacing:0.691px;word-spacing:0.000px;-webkit-text-stroke:0.25px currentColor;">Home</span>
<span style="left:528.60px;top:659.77px;font:400 20px/20px 'Liberation Sans';color:#000;letter-spacing:0.514px;word-spacing:0.000px;-webkit-text-stroke:0.25px currentColor;">Phone:</span>
<span style="left:528.60px;top:686.97px;font:400 20px/20px 'Liberation Sans';color:#000;letter-spacing:0.478px;word-spacing:0.000px;-webkit-text-stroke:0.25px currentColor;">Email:</span>
<span style="left:528.60px;top:716.47px;font:400 20px/20px 'Liberation Sans';color:#000;letter-spacing:0.788px;word-spacing:0.000px;-webkit-text-stroke:0.25px currentColor;">Misc.:</span>
<span style="left:516.60px;top:792.58px;font:400 24px/24px 'Liberation Sans';color:#3a76b7;letter-spacing:0.000px;word-spacing:0.000px;">Vehicles to Insure</span>
<span style="left:626.90px;top:831.28px;font:400 24px/24px 'Liberation Sans';color:#3a76b7;letter-spacing:0.210px;word-spacing:0.000px;">Vehicle</span>
<span style="left:888.70px;top:831.28px;font:400 24px/24px 'Liberation Sans';color:#3a76b7;letter-spacing:0.720px;word-spacing:0.000px;">Make</span>
<span style="left:1080.80px;top:831.28px;font:400 24px/24px 'Liberation Sans';color:#3a76b7;letter-spacing:1.416px;word-spacing:0.000px;">Model</span>
<span style="left:1326.60px;top:831.28px;font:400 24px/24px 'Liberation Sans';color:#3a76b7;letter-spacing:-0.300px;word-spacing:0.000px;">Year</span>
<div style="left:514.7px;top:863px;width:976.5999999999999px;height:1.5px;background:#000;"></div>
<div style="left:514.7px;top:890.5px;width:976.5999999999999px;height:1.5px;background:#000;"></div>
<div style="left:514.7px;top:863px;width:1.5px;height:29px;background:#000;"></div>
<div style="left:824.15px;top:863px;width:1.5px;height:29px;background:#000;"></div>
<div style="left:1020.65px;top:863px;width:1.5px;height:29px;background:#000;"></div>
<div style="left:1245.85px;top:863px;width:1.5px;height:29px;background:#000;"></div>
<div style="left:1489.8px;top:863px;width:1.5px;height:29px;background:#000;"></div>
<span style="left:528.70px;top:868.87px;font:400 20px/20px 'Liberation Sans';color:#000;letter-spacing:0.223px;word-spacing:0.000px;-webkit-text-stroke:0.25px currentColor;">1998 Dodge Ram 1500</span>
<span style="left:836.00px;top:868.87px;font:400 20px/20px 'Liberation Sans';color:#000;letter-spacing:0.422px;word-spacing:0.000px;-webkit-text-stroke:0.25px currentColor;">Dodge</span>
<span style="left:1033.20px;top:868.87px;font:400 20px/20px 'Liberation Sans';color:#000;letter-spacing:0.193px;word-spacing:0.000px;-webkit-text-stroke:0.25px currentColor;">Ram 1500</span>
<span style="left:1258.30px;top:868.87px;font:400 20px/20px 'Liberation Sans';color:#000;letter-spacing:0.610px;word-spacing:0.000px;-webkit-text-stroke:0.25px currentColor;">1998</span>
<span style="left:553.60px;top:944.89px;font:400 20.8px/20.8px 'Liberation Sans';color:#000;letter-spacing:0.300px;word-spacing:-0.378px;-webkit-text-stroke:0.25px currentColor;">I attest that the information provided is correct as of the date provided and wish to use this as the</span>
<span style="left:516.40px;top:974.29px;font:400 20.8px/20.8px 'Liberation Sans';color:#000;letter-spacing:0.300px;word-spacing:-1.367px;-webkit-text-stroke:0.25px currentColor;">basis for an auto insurance quote.</span>
<svg style="left:0;top:0" width="2000" height="1124" viewBox="0 0 2000 1124"><path d="M523 956.4 L527 960.4 L533.6 952.4" fill="none" stroke="#111" stroke-width="2.4" /></svg>
<div style="left:649px;top:252.5px;width:14px;height:5.5px;background:#f4f4f4;box-sizing:border-box;border:1px solid #8a8a8a;border-radius:2px;"></div>
<div style="left:634.8px;top:256px;width:727.2px;height:570px;background:#f0f0f0;box-shadow:0 4px 22px rgba(0,0,0,0.28);"></div>
<div style="left:634.8px;top:256px;width:727.2px;height:48px;background:#ffffff;"></div>
<span style="left:648.70px;top:272.26px;font:400 18px/18px 'Liberation Sans';color:#000;letter-spacing:0.338px;word-spacing:0.000px;-webkit-text-stroke:0.25px currentColor;">Macros</span>
<span style="left:645.30px;top:318.51px;font:400 17px/17px 'Liberation Sans';color:#000;letter-spacing:0.422px;word-spacing:0.000px;-webkit-text-stroke:0.25px currentColor;"><u>M</u>acro name:</span>
<div style="left:646.4px;top:340.7px;width:568.3000000000001px;height:30.80000000000001px;background:#ffffff;box-sizing:border-box;border:1px solid #a4a4a4;border-bottom:none;"></div>
<div style="left:651px;top:345.3px;width:91.70000000000005px;height:19.69999999999999px;background:#99c9f9;"></div>
<span style="left:651.00px;top:348.31px;font:400 17px/17px 'Liberation Sans';color:#000;letter-spacing:0.293px;word-spacing:0.000px;-webkit-text-stroke:0.25px currentColor;">EmailQuote</span>
<div style="left:646.4px;top:370.2px;width:568.3000000000001px;height:250.8px;background:#ffffff;box-sizing:border-box;border:1px solid #9a9a9a;border-top:2px solid #8a8a8a;"></div>
<div style="left:1186.7px;top:373px;width:27.0px;height:247px;background:#f0f0f0;"></div>
<div style="left:649px;top:374.8px;width:536.4000000000001px;height:19.80000000000001px;background:#3399ff;"></div>
<span style="left:652.60px;top:378.92px;font:400 16.4px/16.4px 'Liberation Sans';color:#ffffff;letter-spacing:0.531px;word-spacing:0.000px;-webkit-text-stroke:0.25px currentColor;">EmailQuote</span>
<span style="left:653.60px;top:398.82px;font:400 16.4px/16.4px 'Liberation Sans';color:#000;letter-spacing:0.550px;word-spacing:0.000px;-webkit-text-stroke:0.25px currentColor;">TemporaryMacro</span>
<div style="left:1229.4px;top:340.3px;width:119.29999999999995px;height:34.69999999999999px;background:#e1e1e1;box-sizing:border-box;border:2px solid #0078d7;"></div>
<span style="left:1272.68px;top:349.61px;font:400 17.3px/17.3px 'Liberation Sans';color:#000;letter-spacing:0.330px;word-spacing:0.000px;-webkit-text-stroke:0.25px currentColor;"><u>R</u>un</span>
<div style="left:1229.4px;top:388px;width:119.29999999999995px;height:33.5px;background:#e1e1e1;box-sizing:border-box;border:1px solid #adadad;"></div>
<span style="left:1253.05px;top:396.56px;font:400 17.3px/17.3px 'Liberation Sans';color:#000;letter-spacing:0.429px;word-spacing:0.000px;-webkit-text-stroke:0.25px currentColor;"><u>S</u>tep Into</span>
<div style="left:1229.4px;top:435px;width:119.29999999999995px;height:33.5px;background:#e1e1e1;box-sizing:border-box;border:1px solid #adadad;"></div>
<span style="left:1272.45px;top:443.66px;font:400 17.3px/17.3px 'Liberation Sans';color:#000;letter-spacing:0.741px;word-spacing:0.000px;-webkit-text-stroke:0.25px currentColor;"><u>E</u>dit</span>
<div style="left:1229.4px;top:481.5px;width:119.29999999999995px;height:33.5px;background:#e1e1e1;box-sizing:border-box;border:1px solid #adadad;"></div>
<span style="left:1263.30px;top:490.66px;font:400 17.3px/17.3px 'Liberation Sans';color:#000;letter-spacing:0.048px;word-spacing:0.000px;-webkit-text-stroke:0.25px currentColor;"><u>C</u>reate</span>
<div style="left:1229.4px;top:528.2px;width:119.29999999999995px;height:33.59999999999991px;background:#e1e1e1;box-sizing:border-box;border:1px solid #adadad;"></div>
<span style="left:1262.70px;top:537.66px;font:400 17.3px/17.3px 'Liberation Sans';color:#000;letter-spacing:0.471px;word-spacing:0.000px;-webkit-text-stroke:0.25px currentColor;"><u>D</u>elete</span>
<div style="left:1229.4px;top:575px;width:119.29999999999995px;height:33.5px;background:#e1e1e1;box-sizing:border-box;border:1px solid #adadad;"></div>
<span style="left:1242.65px;top:584.66px;font:400 17.3px/17.3px 'Liberation Sans';color:#000;letter-spacing:0.389px;word-spacing:0.000px;-webkit-text-stroke:0.25px currentColor;">Or<u>g</u>anizer...</span>
<div style="left:1234.2px;top:778.6px;width:114.5px;height:33.19999999999993px;background:#e1e1e1;box-sizing:border-box;border:1px solid #adadad;"></div>
<span style="left:1265.70px;top:787.36px;font:400 17.3px/17.3px 'Liberation Sans';color:#000;letter-spacing:-0.291px;word-spacing:0.000px;-webkit-text-stroke:0.25px currentColor;">Cancel</span>
<span style="left:645.30px;top:635.86px;font:400 17.3px/17.3px 'Liberation Sans';color:#000;letter-spacing:0.411px;word-spacing:0.000px;-webkit-text-stroke:0.25px currentColor;">M<u>a</u>cros in:</span>
<div style="left:742.5px;top:627.2px;width:471.9000000000001px;height:33.0px;background:#ffffff;box-sizing:border-box;border:1px solid #adadad;"></div>
<div style="left:1187.2px;top:627.2px;width:27.200000000000045px;height:33.0px;background:#e5e5e5;box-sizing:border-box;border:2px solid #b4b4b4;"></div>
<span style="left:749.00px;top:635.46px;font:400 17.3px/17.3px 'Liberation Sans';color:#000;letter-spacing:0.294px;word-spacing:0.000px;-webkit-text-stroke:0.25px currentColor;">All active templates and documents</span>
<span style="left:645.30px;top:668.16px;font:400 17.3px/17.3px 'Liberation Sans';color:#000;letter-spacing:0.560px;word-spacing:0.000px;-webkit-text-stroke:0.25px currentColor;">Descr<u>i</u>ption:</span>
<div style="left:646px;top:691.2px;width:704.5px;height:68.79999999999995px;background:#ffffff;box-sizing:border-box;border:1px solid #adadad;"></div>
<svg style="left:0;top:0" width="2000" height="1124" viewBox="0 0 2000 1124"><text x="1254" y="287.4" font-family="Liberation Sans" font-size="21" fill="#1a1a1a" text-anchor="middle">?</text><path d="M1316.4 272 L1332.2 287.4 M1332.2 272 L1316.4 287.4" fill="none" stroke="#1a1a1a" stroke-width="1.5" /><path d="M1194.6 391.8 L1199.6 386.8 L1204.6 391.8" fill="none" stroke="#c2c2c2" stroke-width="1.6" /><path d="M1194.6 602.6 L1199.6 607.6 L1204.6 602.6" fill="none" stroke="#c2c2c2" stroke-width="1.6" /><path d="M1193.6 641 L1199.3 646.7 L1205 641" fill="none" stroke="#444" stroke-width="1.4" /><path d="M754 381.2 V407 L760.6 401 L765.2 411.4 L769.4 409.6 L764.8 399.4 L773 399.4 Z" fill="#fff" stroke="#000" stroke-width="1.5" stroke-linejoin="miter"/></svg>
<span style="left:9.40px;top:1100.71px;font:400 17px/17px 'Liberation Sans';color:#444444;letter-spacing:0.090px;word-spacing:0.000px;-webkit-text-stroke:0.25px currentColor;">Page 1 of 1</span>
<span style="left:128.80px;top:1100.71px;font:400 17px/17px 'Liberation Sans';color:#444444;letter-spacing:0.503px;word-spacing:0.000px;-webkit-text-stroke:0.25px currentColor;">80 words</span>
<div style="left:1602.5px;top:1094px;width:59.5px;height:28px;background:#c6c6c6;"></div>
<span style="left:1942.75px;top:1100.71px;font:400 17px/17px 'Liberation Sans';color:#444444;letter-spacing:-0.371px;word-spacing:0.000px;-webkit-text-stroke:0.25px currentColor;">100%</span>
<svg style="left:0;top:0" width="2000" height="1124" viewBox="0 0 2000 1124"><path d="M243.5 1117.6 V1099.6 L241.8 1098.6 H233.6 V1115.2 H241.8 L243.5 1116.6 L245.2 1115.2 H253.4 V1111" fill="none" stroke="#6a6a6a" stroke-width="1.6" /><path d="M243.5 1099.6 L245.2 1098.6 H253.4 V1102.4" fill="none" stroke="#6a6a6a" stroke-width="1.6" /><path d="M241.4 1116 L243.5 1118.6 L245.6 1116 Z" fill="#6a6a6a" /><path d="M246.6 1107 L249.2 1109.6 L254.6 1103.6" fill="none" stroke="#6a6a6a" stroke-width="1.9" /><circle cx="292.6" cy="1103" r="4.4" fill="#6a6a6a"/><rect x="299.2" y="1100.3" width="8.800000000000011" height="4.100000000000136" fill="#6a6a6a" /><path d="M307.2 1100.3 V1118 H291.1 V1109.8" fill="none" stroke="#6a6a6a" stroke-width="1.7" /><rect x="297.5" y="1107.7" width="2.6000000000000227" height="1.599999999999909" fill="#6a6a6a" /><rect x="302.2" y="1107.7" width="2.6000000000000227" height="1.599999999999909" fill="#6a6a6a" /><rect x="292.7" y="1110.8" width="2.6000000000000227" height="1.599999999999909" fill="#6a6a6a" /><rect x="297.5" y="1110.8" width="2.6000000000000227" height="1.599999999999909" fill="#6a6a6a" /><rect x="302.2" y="1110.8" width="2.6000000000000227" height="1.599999999999909" fill="#6a6a6a" /><rect x="292.7" y="1114.0" width="2.6000000000000227" height="1.599999999999909" fill="#6a6a6a" /><rect x="297.5" y="1114.0" width="2.6000000000000227" height="1.599999999999909" fill="#6a6a6a" /><rect x="302.2" y="1114.0" width="2.6000000000000227" height="1.599999999999909" fill="#6a6a6a" /><path d="M1562.6 1099.2 H1570.6 L1572 1100.6 L1573.4 1099.2 H1581.4 V1115.6 H1573.4 L1572 1117 L1570.6 1115.6 H1562.6 Z" fill="none" stroke="#6a6a6a" stroke-width="1.5" /><line x1="1572" y1="1100.6" x2="1572" y2="1117" stroke="#6a6a6a" stroke-width="1.6" /><path d="M1570.2 1116.4 L1572 1118.8 L1573.8 1116.4 Z" fill="#6a6a6a" /><line x1="1565.2" y1="1102.4" x2="1569.6" y2="1102.4" stroke="#6a6a6a" stroke-width="1.4" /><line x1="1574.4" y1="1102.4" x2="1579" y2="1102.4" stroke="#6a6a6a" stroke-width="1.4" /><line x1="1565.2" y1="1105.5" x2="1569.6" y2="1105.5" stroke="#6a6a6a" stroke-width="1.4" /><line x1="1574.4" y1="1105.5" x2="1579" y2="1105.5" stroke="#6a6a6a" stroke-width="1.4" /><line x1="1565.2" y1="1108.6" x2="1569.6" y2="1108.6" stroke="#6a6a6a" stroke-width="1.4" /><line x1="1574.4" y1="1108.6" x2="1579" y2="1108.6" stroke="#6a6a6a" stroke-width="1.4" /><line x1="1565.2" y1="1111.8" x2="1569.6" y2="1111.8" stroke="#6a6a6a" stroke-width="1.4" /><line x1="1574.4" y1="1111.8" x2="1579" y2="1111.8" stroke="#6a6a6a" stroke-width="1.4" /><rect x="1621.6" y="1098.9" width="21.0" height="19.299999999999955" fill="none" stroke="#6a6a6a" stroke-width="1.6" /><line x1="1624.4" y1="1102.4" x2="1639.8" y2="1102.4" stroke="#6a6a6a" stroke-width="1.4" /><line x1="1624.4" y1="1105.5" x2="1639.8" y2="1105.5" stroke="#6a6a6a" stroke-width="1.4" /><line x1="1624.4" y1="1108.6" x2="1639.8" y2="1108.6" stroke="#6a6a6a" stroke-width="1.4" /><line x1="1624.4" y1="1111.8" x2="1639.8" y2="1111.8" stroke="#6a6a6a" stroke-width="1.4" /><line x1="1624.4" y1="1115" x2="1639.8" y2="1115" stroke="#6a6a6a" stroke-width="1.4" /><path d="M1688.6 1116.8 H1681.2 V1099.2 H1699.4 V1104.6" fill="none" stroke="#6a6a6a" stroke-width="1.5" /><line x1="1683.8" y1="1102.4" x2="1696.6" y2="1102.4" stroke="#6a6a6a" stroke-width="1.3" /><line x1="1683.8" y1="1105.5" x2="1692.4" y2="1105.5" stroke="#6a6a6a" stroke-width="1.3" /><line x1="1683.8" y1="1108.6" x2="1690.2" y2="1108.6" stroke="#6a6a6a" stroke-width="1.3" /><line x1="1683.8" y1="1111.8" x2="1690.2" y2="1111.8" stroke="#6a6a6a" stroke-width="1.3" /><circle cx="1696.4" cy="1112.4" r="5.6" fill="#f1f1f1"/><circle cx="1696.4" cy="1112.4" r="4.8" fill="#6a6a6a"/><path d="M1693.2 1109.4 Q1695.6 1109.6 1695.8 1112.2 Q1696.2 1114.8 1699 1115.4" fill="none" stroke="#d8d8d8" stroke-width="1.1" /><rect x="1728.8" y="1108" width="10.0" height="2.400000000000091" fill="#6a6a6a" /><rect x="1745" y="1108.6" width="155" height="1.0" fill="#a8a8a8" /><rect x="1819.6" y="1100" width="6.600000000000136" height="17.59999999999991" fill="#606060" /><rect x="1907" y="1108.2" width="13" height="2.2000000000000455" fill="#6a6a6a" /><rect x="1912.4" y="1102.6" width="2.199999999999818" height="13.400000000000091" fill="#6a6a6a" /></svg>
</body></html>
